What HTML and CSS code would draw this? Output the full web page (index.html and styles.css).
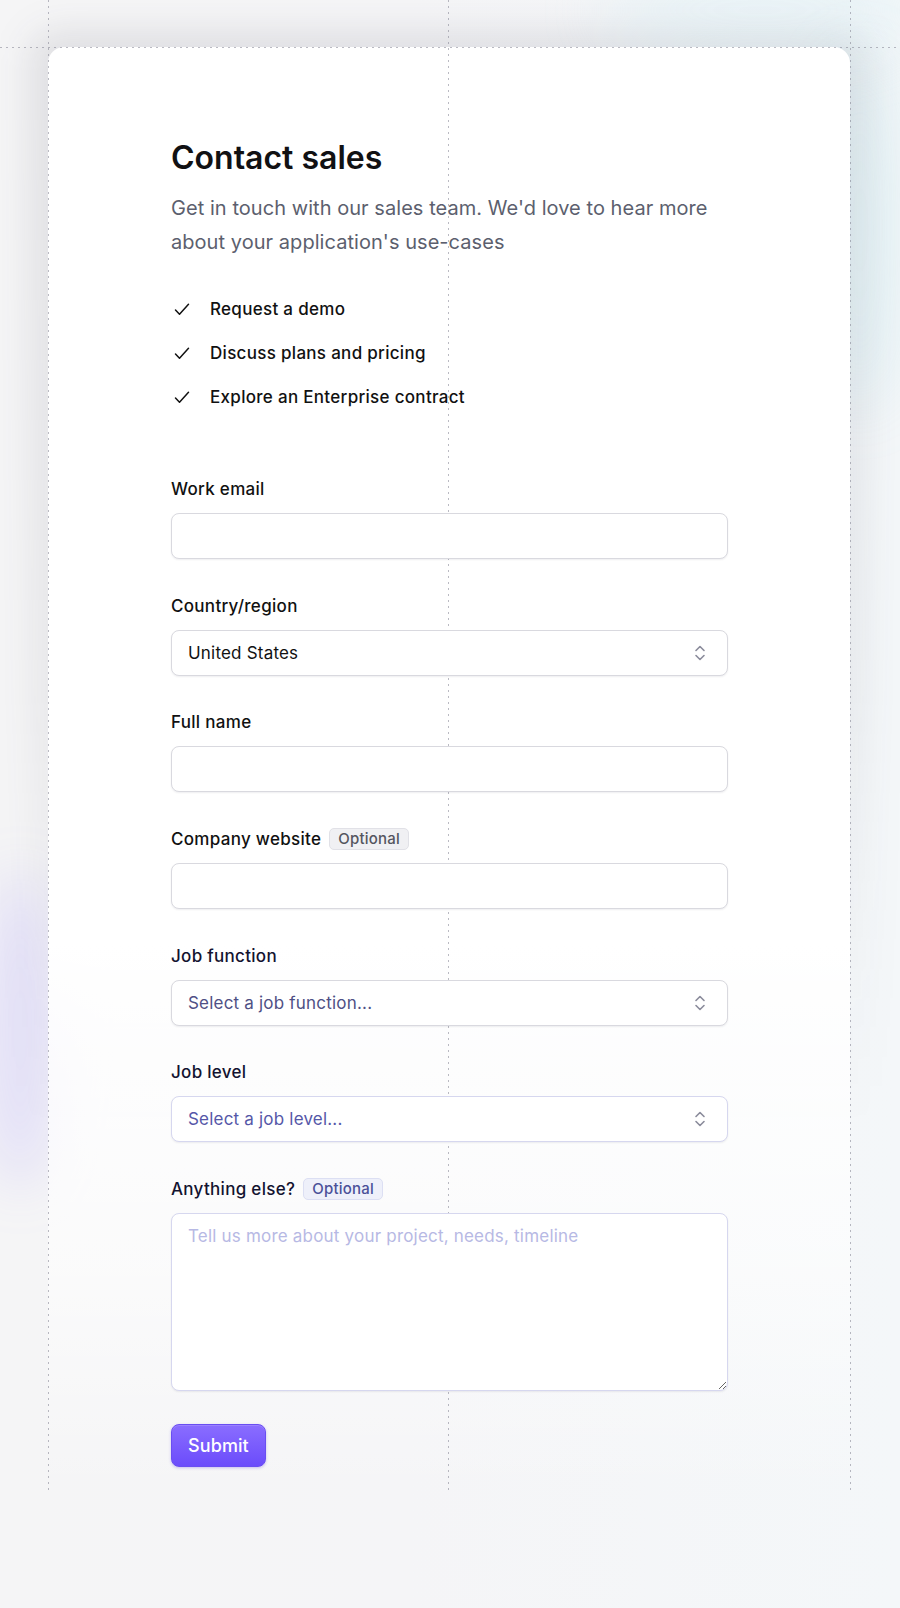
FILE: index.html
```html
<!DOCTYPE html>
<html lang="en">
<head>
<meta charset="utf-8">
<title>Contact sales</title>
<link rel="stylesheet" href="styles.css">
</head>
<body>
<div class="page">
  <div class="glow glow-shadow"></div>
  <div class="glow glow-cyan"></div>
  <div class="glow glow-cyan-top"></div>
  <div class="glow glow-purple"></div>
  <div class="guide guide-v guide-left"></div>
  <div class="guide guide-v guide-mid"></div>
  <div class="guide guide-v guide-right"></div>
  <div class="guide guide-h"></div>

  <main class="card">
    <div class="content">
      <h1 class="title">Contact sales</h1>
      <p class="lead">Get in touch with our sales team. We'd love to hear more about your application's use-cases</p>
      <ul class="checks">
        <li><svg class="check" width="16" height="13" viewBox="0 0 16 13"><path d="M1.5 7 L5.5 11.2 L14.5 1.2" fill="none" stroke="#111" stroke-width="1.5" stroke-linecap="round" stroke-linejoin="round"/></svg>Request a demo</li>
        <li><svg class="check" width="16" height="13" viewBox="0 0 16 13"><path d="M1.5 7 L5.5 11.2 L14.5 1.2" fill="none" stroke="#111" stroke-width="1.5" stroke-linecap="round" stroke-linejoin="round"/></svg>Discuss plans and pricing</li>
        <li><svg class="check" width="16" height="13" viewBox="0 0 16 13"><path d="M1.5 7 L5.5 11.2 L14.5 1.2" fill="none" stroke="#111" stroke-width="1.5" stroke-linecap="round" stroke-linejoin="round"/></svg>Explore an Enterprise contract</li>
      </ul>

      <form class="form">
        <div class="field">
          <label class="label" for="email">Work email</label>
          <input class="input" id="email" type="email">
        </div>
        <div class="field">
          <label class="label" for="country">Country/region</label>
          <div class="select-wrap">
            <select class="input select" id="country"><option>United States</option></select>
            <svg class="chev" width="12" height="18" viewBox="0 0 12 18"><path d="M2 6.5 L6 2.5 L10 6.5 M2 11.5 L6 15.5 L10 11.5" fill="none" stroke="#8a8b9b" stroke-width="1.6" stroke-linecap="round" stroke-linejoin="round"/></svg>
          </div>
        </div>
        <div class="field">
          <label class="label" for="name">Full name</label>
          <input class="input" id="name" type="text">
        </div>
        <div class="field">
          <label class="label" for="web">Company website <span class="badge">Optional</span></label>
          <input class="input" id="web" type="text">
        </div>
        <div class="field">
          <label class="label label-navy" for="fn">Job function</label>
          <div class="select-wrap">
            <select class="input select placeholder-a" id="fn"><option>Select a job function...</option></select>
            <svg class="chev" width="12" height="18" viewBox="0 0 12 18"><path d="M2 6.5 L6 2.5 L10 6.5 M2 11.5 L6 15.5 L10 11.5" fill="none" stroke="#8a8b9b" stroke-width="1.6" stroke-linecap="round" stroke-linejoin="round"/></svg>
          </div>
        </div>
        <div class="field">
          <label class="label label-navy" for="lvl">Job level</label>
          <div class="select-wrap">
            <select class="input select placeholder-b tint" id="lvl"><option>Select a job level...</option></select>
            <svg class="chev" width="12" height="18" viewBox="0 0 12 18"><path d="M2 6.5 L6 2.5 L10 6.5 M2 11.5 L6 15.5 L10 11.5" fill="none" stroke="#8a8b9b" stroke-width="1.6" stroke-linecap="round" stroke-linejoin="round"/></svg>
          </div>
        </div>
        <div class="field">
          <label class="label label-navy" for="else">Anything else? <span class="badge badge-blue">Optional</span></label>
          <textarea class="input textarea tint" id="else" placeholder="Tell us more about your project, needs, timeline"></textarea>
        </div>
        <div class="actions">
          <button class="submit" type="button">Submit</button>
        </div>
      </form>
    </div>
  </main>
</div>
</body>
</html>
```

FILE: styles.css
```css
html, body {
  margin: 0;
  padding: 0;
}
body {
  background: linear-gradient(90deg, #f5f5f6 0%, #f5f5f7 45%, #f4f7f9 100%);
  font-family: Inter, "Noto Sans", "Liberation Sans", sans-serif;
  color: #111;
}
.page {
  position: relative;
  width: 900px;
  height: 1608px;
  overflow: hidden;
}

/* decorative glows */
.glow {
  position: absolute;
  z-index: -1;
  pointer-events: none;
}
.glow-shadow {
  left: 28px;
  top: 30px;
  width: 842px;
  height: 1100px;
  border-radius: 30px;
  background: linear-gradient(to bottom, rgba(40, 40, 60, 0.10), rgba(40, 40, 60, 0.06) 60%, rgba(40, 40, 60, 0));
  filter: blur(18px);
}
.glow-cyan {
  left: 815px;
  top: 50px;
  width: 90px;
  height: 360px;
  border-radius: 50%;
  background: rgba(150, 215, 232, 0.16);
  filter: blur(30px);
}
.glow-cyan-top {
  left: 600px;
  top: -40px;
  width: 320px;
  height: 100px;
  border-radius: 50%;
  background: rgba(205, 235, 242, 0.25);
  filter: blur(30px);
}
.glow-purple {
  left: -20px;
  top: 870px;
  width: 80px;
  height: 320px;
  border-radius: 50%;
  background: rgba(140, 125, 255, 0.17);
  filter: blur(26px);
}

/* guide lines */
.guide {
  position: absolute;
  z-index: 1;
  pointer-events: none;
}
.guide-v {
  top: 0;
  width: 1px;
  height: 1494px;
  background-image: repeating-linear-gradient(to bottom, rgba(130, 130, 145, 0.55) 0 2px, transparent 2px 6px);
}
.guide-left { left: 48px; }
.guide-mid { left: 448px; }
.guide-right { left: 850px; }
.guide-h {
  left: 0;
  top: 47px;
  width: 900px;
  height: 1px;
  background-image: repeating-linear-gradient(to right, rgba(130, 130, 145, 0.55) 0 2px, transparent 2px 6px);
}

/* card */
.card {
  position: relative;
  margin: 47px 0 0 48px;
  width: 802px;
  box-sizing: border-box;
  padding: 91px 122px 27px 123px;
  border-radius: 16px 16px 0 0;
  background: linear-gradient(to bottom, #ffffff 0%, #ffffff 62%, rgba(255, 255, 255, 0.55) 85%, rgba(255, 255, 255, 0) 100%);
}
.content {
  position: relative;
  z-index: 2;
}
.title {
  margin: 0;
  font-size: 32px;
  line-height: 40px;
  font-weight: 600;
  letter-spacing: 0;
  color: #111113;
}
.lead {
  margin: 13px 0 0;
  font-size: 20px;
  line-height: 34px;
  color: #5c5f6e;
  letter-spacing: 0.05px;
}
.checks {
  list-style: none;
  margin: 38px 0 0;
  padding: 0;
  display: flex;
  flex-direction: column;
  gap: 20px;
}
.checks li {
  display: flex;
  align-items: center;
  font-size: 17px;
  line-height: 24px;
  font-weight: 500;
  color: #111;
  letter-spacing: 0.3px;
}
.check {
  margin: 0 20px 0 3px;
  flex: none;
}

/* form */
.form {
  margin-top: 68px;
  display: flex;
  flex-direction: column;
  gap: 34.7px;
}
.field {
  display: flex;
  flex-direction: column;
  gap: 12px;
}
.label {
  display: flex;
  align-items: center;
  gap: 8px;
  font-size: 17px;
  line-height: 24px;
  font-weight: 500;
  color: #111;
  letter-spacing: 0.3px;
}
.label-navy { color: #131330; }
.badge {
  display: inline-flex;
  align-items: center;
  height: 22px;
  box-sizing: border-box;
  padding: 0 8px;
  border: 1px solid #e1e1e7;
  border-radius: 5px;
  background: #f0f0f3;
  font-size: 15px;
  font-weight: 500;
  color: #55565f;
  letter-spacing: 0.2px;
}
.badge-blue {
  background: #eef0fa;
  border-color: #dcdff3;
  color: #4b5199;
}
.input {
  display: block;
  width: 100%;
  height: 46px;
  box-sizing: border-box;
  margin: 0;
  padding: 0 16px;
  border: 1px solid #d9d9df;
  border-radius: 8px;
  background: #fff;
  box-shadow: 0 1px 2px rgba(20, 20, 40, 0.07);
  font-family: inherit;
  font-size: 17px;
  letter-spacing: 0.2px;
  color: #111;
  outline: none;
}
.tint { border-color: #d6d7ef; }
.select-wrap {
  position: relative;
}
.select {
  appearance: none;
  -webkit-appearance: none;
  padding-right: 44px;
}
.placeholder-a { color: #4f5085; }
.placeholder-b { color: #5557a8; }
.chev {
  position: absolute;
  right: 22px;
  top: 14px;
  pointer-events: none;
}
.textarea {
  height: 178px;
  padding: 10px 16px;
  line-height: 24px;
  resize: vertical;
}
.textarea::placeholder {
  color: #b7b9e4;
}
.actions {
  margin-top: -1.7px;
}
.submit {
  height: 43px;
  padding: 0 16px;
  border: 1px solid #6a4ef2;
  border-radius: 8px;
  background: linear-gradient(to bottom, #8a6dff, #6b4cfb);
  box-shadow: 0 1px 3px rgba(90, 60, 220, 0.3), inset 0 1px 0 rgba(255, 255, 255, 0.15);
  font-family: inherit;
  font-size: 18px;
  font-weight: 500;
  color: #fff;
  letter-spacing: 0.1px;
}
```
